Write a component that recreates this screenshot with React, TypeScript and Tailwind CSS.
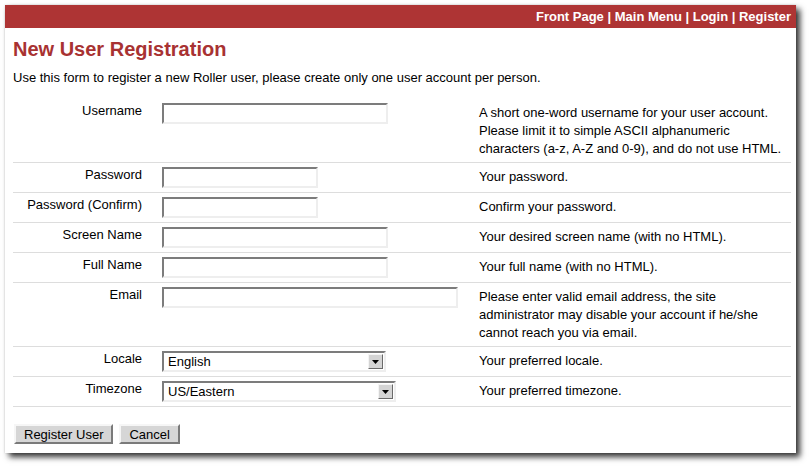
import React from "react";

const font = { fontFamily: '"Liberation Sans", Arial, sans-serif' };

function TextBox({ w }: { w: number }) {
  return (
    <div
      className="h-[21px] bg-white border-2 border-t-[#7c7c7c] border-l-[#7c7c7c] border-b-[#eeeeee] border-r-[#eeeeee]"
      style={{ width: w }}
    />
  );
}

function SelectBox({ w, value }: { w: number; value: string }) {
  return (
    <div
      className="h-[21px] bg-white border-2 border-t-[#7c7c7c] border-l-[#7c7c7c] border-b-[#eeeeee] border-r-[#eeeeee] flex items-center"
      style={{ width: w }}
    >
      <span className="flex-1 pl-[4px] text-[13px] leading-[15px] text-black">{value}</span>
      <div className="w-[15px] h-[15px] mr-[1px] bg-[#d4d4d4] border border-t-[#f4f4f4] border-l-[#f4f4f4] border-b-[#6a6a6a] border-r-[#6a6a6a] flex items-center justify-center">
        <svg width="7" height="4" viewBox="0 0 7 4">
          <polygon points="0,0 7,0 3.5,4" fill="#000" />
        </svg>
      </div>
    </div>
  );
}

type Row = {
  label: string;
  field: React.ReactNode;
  help: string;
};

const rows: Row[] = [
  {
    label: "Username",
    field: <TextBox w={226} />,
    help: "A short one-word username for your user account. Please limit it to simple ASCII alphanumeric characters (a-z, A-Z and 0-9), and do not use HTML.",
  },
  { label: "Password", field: <TextBox w={156} />, help: "Your password." },
  { label: "Password (Confirm)", field: <TextBox w={156} />, help: "Confirm your password." },
  { label: "Screen Name", field: <TextBox w={226} />, help: "Your desired screen name (with no HTML)." },
  { label: "Full Name", field: <TextBox w={226} />, help: "Your full name (with no HTML)." },
  {
    label: "Email",
    field: <TextBox w={296} />,
    help: "Please enter valid email address, the site administrator may disable your account if he/she cannot reach you via email.",
  },
  { label: "Locale", field: <SelectBox w={224} value="English" />, help: "Your preferred locale." },
  { label: "Timezone", field: <SelectBox w={234} value="US/Eastern" />, help: "Your preferred timezone." },
];

function Button({ children }: { children: React.ReactNode }) {
  return (
    <div className="h-[20px] px-2 bg-[#d6d6d6] border-2 border-t-[#f6f6f6] border-l-[#f6f6f6] border-b-[#7a7a7a] border-r-[#7a7a7a] flex items-center text-[13px] leading-[15px] text-black">
      {children}
    </div>
  );
}

export default function App() {
  return (
    <div className="w-[811px] h-[468px] bg-white pt-[5px] pl-[5px]" style={font}>
      <div className="w-[791px] bg-white shadow-[4px_4px_6px_rgba(0,0,0,0.8),0_0_2px_rgba(0,0,0,0.15)]">
        <div className="h-[23px] bg-[#ae3434] flex items-center justify-end pr-[5px] text-white font-bold text-[13px] leading-[15px]">
          Front Page | Main Menu | Login | Register
        </div>
        <div className="pl-[8px] pr-[5px] pb-[9px]">
          <h1 className="mt-[9px] text-[20px] leading-[24px] font-bold text-[#a83232]">
            New User Registration
          </h1>
          <p className="mt-2 text-[13px] leading-[18px] text-black">
            Use this form to register a new Roller user, please create only one user account per person.
          </p>
          <div className="mt-3">
            {rows.map((r) => (
              <div key={r.label} className="flex items-start py-1 border-b border-[#dddddd]">
                <div className="w-[129px] text-right text-[13px] leading-[15px] text-black">{r.label}</div>
                <div className="ml-[20px] w-[317px]">{r.field}</div>
                <div className="flex-1 mt-[1px] text-[13px] leading-[18px] text-black">{r.help}</div>
              </div>
            ))}
          </div>
          <div className="mt-[17px] ml-[1px] flex gap-[6px]">
            <Button>Register User</Button>
            <Button>Cancel</Button>
          </div>
        </div>
      </div>
    </div>
  );
}
